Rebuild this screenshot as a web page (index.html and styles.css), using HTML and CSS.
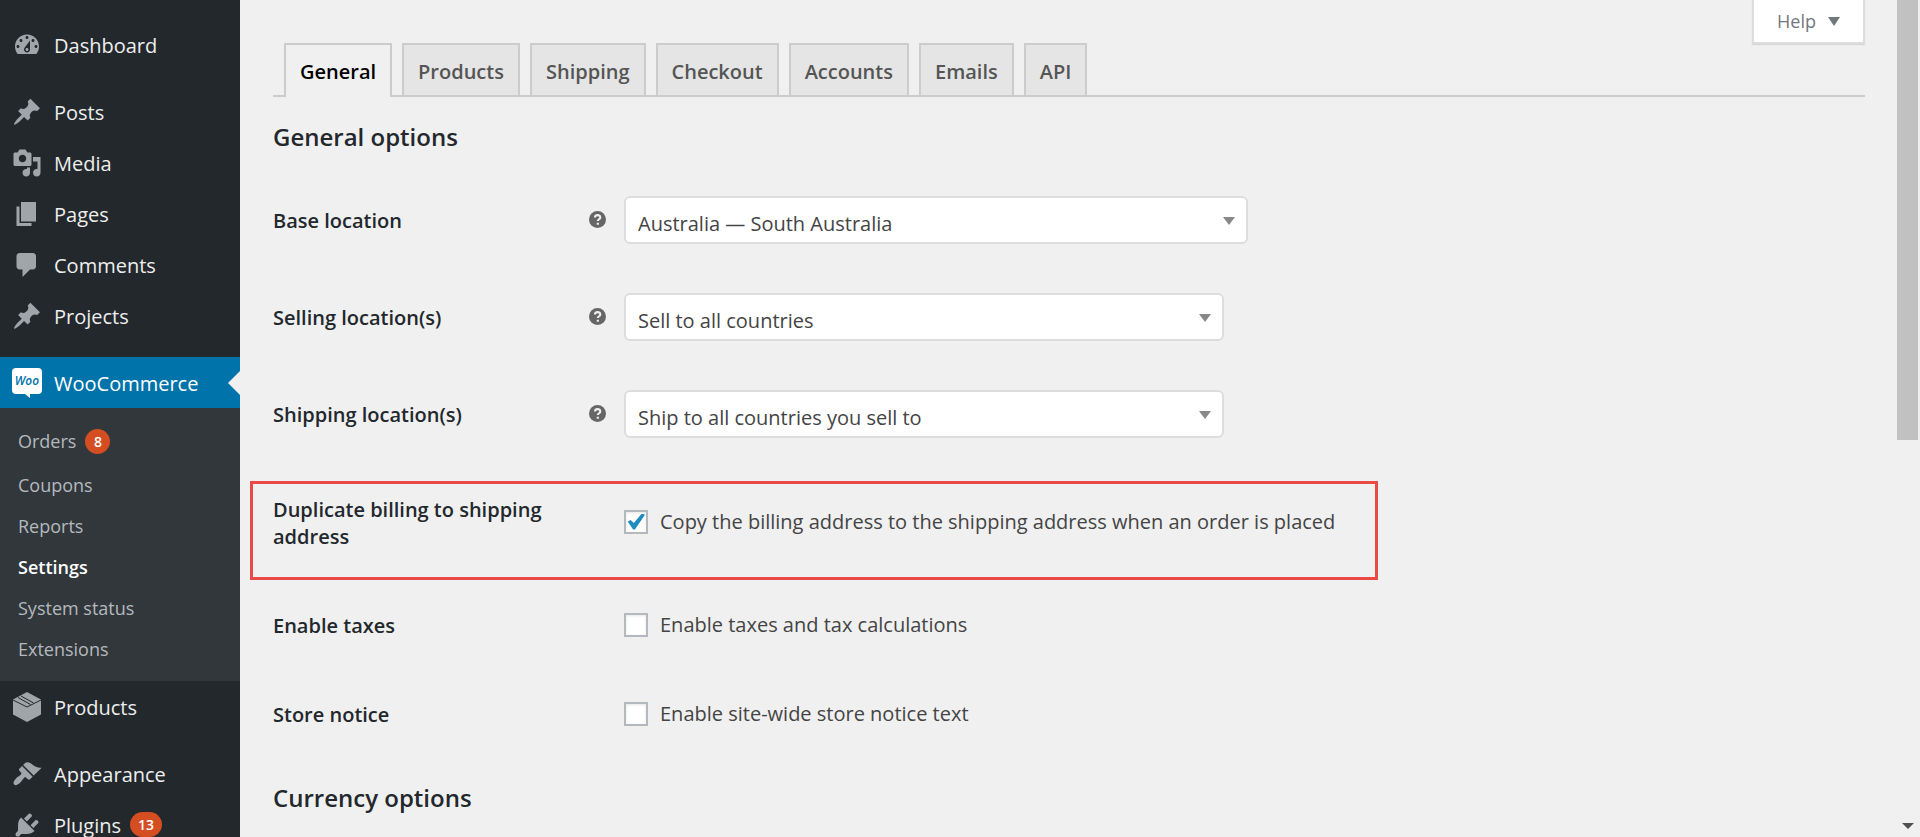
FILE: index.html
```html
<!DOCTYPE html>
<html lang="en">
<head>
<meta charset="utf-8">
<title>WooCommerce settings</title>
<link rel="stylesheet" href="styles.css">
</head>
<body>
<div class="app">
  <nav class="sidebar" aria-label="Main menu">
    <ul class="menu">
      <li><a class="menu-link" href="#"><svg class="icon" viewBox="0 0 20 20"><path d="M3.76 16h12.48c1.1-1.37 1.76-3.11 1.76-5 0-4.42-3.58-8-8-8s-8 3.58-8 8c0 1.89.66 3.63 1.76 5zM10 4c.55 0 1 .45 1 1s-.45 1-1 1-1-.45-1-1 .45-1 1-1zM6 6c.55 0 1 .45 1 1s-.45 1-1 1-1-.45-1-1 .45-1 1-1zm8 0c.55 0 1 .45 1 1s-.45 1-1 1-1-.45-1-1 .45-1 1-1zm-5.37 5.55L12 7v6c0 1.1-.9 2-2 2s-2-.9-2-2c0-.57.24-1.08.63-1.45zM4 10c.55 0 1 .45 1 1s-.45 1-1 1-1-.45-1-1 .45-1 1-1zm12 0c.55 0 1 .45 1 1s-.45 1-1 1-1-.45-1-1 .45-1 1-1zm-5 3c0-.55-.45-1-1-1s-1 .45-1 1 .45 1 1 1 1-.45 1-1z"/></svg><span class="menu-text">Dashboard</span></a></li>
      <li class="menu-group"><a class="menu-link" href="#"><svg class="icon" viewBox="0 0 20 20"><path d="M10.44 3.02l1.82-1.82 6.36 6.35-1.83 1.82c-1.05-.68-2.48-.57-3.41.36l-.75.75c-.92.93-1.04 2.35-.35 3.41l-1.83 1.82-2.41-2.41-2.8 2.79c-.42.42-3.38 2.71-3.8 2.29s1.86-3.39 2.28-3.81l2.79-2.79L4.1 9.36l1.83-1.82c1.05.69 2.48.57 3.4-.36l.75-.75c.93-.92 1.05-2.35.36-3.41z"/></svg><span class="menu-text">Posts</span></a></li>
      <li><a class="menu-link" href="#"><svg class="icon" viewBox="0 0 20 20"><path d="M13 11V4c0-.55-.45-1-1-1h-1.67L9 1H5L3.67 3H2c-.55 0-1 .45-1 1v7c0 .55.45 1 1 1h10c.55 0 1-.45 1-1zM7 4.5c1.38 0 2.5 1.12 2.5 2.5S8.38 9.5 7 9.5 4.5 8.38 4.5 7 5.62 4.5 7 4.5zM14 6h5v10.5c0 1.38-1.12 2.5-2.5 2.5S14 17.88 14 16.5s1.12-2.5 2.5-2.5c.17 0 .34.02.5.05V9h-3V6zm-4 8.05V13h2v3.5c0 1.38-1.12 2.5-2.5 2.5S7 17.88 7 16.5 8.12 14 9.5 14c.17 0 .34.02.5.05z"/></svg><span class="menu-text">Media</span></a></li>
      <li><a class="menu-link" href="#"><svg class="icon" viewBox="0 0 20 20"><path d="M6 15V2h10v13H6zm-1 1h8v2H3V5h2v11z"/></svg><span class="menu-text">Pages</span></a></li>
      <li><a class="menu-link" href="#"><svg class="icon" viewBox="0 0 20 20"><path d="M5 2h9c1.1 0 2 .9 2 2v7c0 1.1-.9 2-2 2h-2l-5 5v-5H5c-1.1 0-2-.9-2-2V4c0-1.1.9-2 2-2z"/></svg><span class="menu-text">Comments</span></a></li>
      <li><a class="menu-link" href="#"><svg class="icon" viewBox="0 0 20 20"><path d="M10.44 3.02l1.82-1.82 6.36 6.35-1.83 1.82c-1.05-.68-2.48-.57-3.41.36l-.75.75c-.92.93-1.04 2.35-.35 3.41l-1.83 1.82-2.41-2.41-2.8 2.79c-.42.42-3.38 2.71-3.8 2.29s1.86-3.39 2.28-3.81l2.79-2.79L4.1 9.36l1.83-1.82c1.05.69 2.48.57 3.4-.36l.75-.75c.93-.92 1.05-2.35.36-3.41z"/></svg><span class="menu-text">Projects</span></a></li>
      <li class="menu-group">
        <a class="menu-link menu-link--current" href="#"><svg class="icon" viewBox="0 0 30 30"><path d="M4 0h22a4 4 0 0 1 4 4v18a4 4 0 0 1-4 4h-8v4l-5-4H4a4 4 0 0 1-4-4V4a4 4 0 0 1 4-4z"/><text class="woo-mark" x="15" y="17" text-anchor="middle">Woo</text></svg><span class="menu-text">WooCommerce</span></a>
        <ul class="submenu">
          <li><a class="submenu-link" href="#">Orders <span class="count">8</span></a></li>
          <li><a class="submenu-link" href="#">Coupons</a></li>
          <li><a class="submenu-link" href="#">Reports</a></li>
          <li><a class="submenu-link submenu-link--current" href="#">Settings</a></li>
          <li><a class="submenu-link" href="#">System status</a></li>
          <li><a class="submenu-link" href="#">Extensions</a></li>
        </ul>
      </li>
      <li><a class="menu-link" href="#"><svg class="icon" viewBox="0 0 30 30"><path d="M15 0l14 7.500v15L15 30 1 22.500v-15z"/><path class="box-seam" d="M1 8l14 7 14-7M9 4l12.500 7M6 5.500l12.500 7"/></svg><span class="menu-text">Products</span></a></li>
      <li class="menu-group"><a class="menu-link" href="#"><svg class="icon" viewBox="0 0 20 20"><path d="M14.48 11.06L7.41 3.99l1.5-1.5c.5-.56 2.3-.47 3.51.32 1.21.8 1.43 1.28 2.91 2.1 1.18.64 2.45 1.26 4.45.85zm-.71.71L6.7 4.7 4.93 6.47c-.39.39-.39 1.02 0 1.41l1.06 1.06c.39.39.39 1.03 0 1.42-.6.6-1.43 1.11-2.21 1.69-.35.26-.7.53-1.01.84C1.43 14.23.4 16.08 1.4 17.07c.99 1 2.84-.03 4.18-1.36.31-.31.58-.66.85-1.02.57-.78 1.08-1.61 1.69-2.21.39-.39 1.02-.39 1.41 0l1.06 1.06c.39.39 1.02.39 1.41 0z"/></svg><span class="menu-text">Appearance</span></a></li>
      <li><a class="menu-link" href="#"><svg class="icon" viewBox="0 0 20 20"><path d="M13.11 4.36L9.87 7.6 8 5.73l3.24-3.24c.35-.34 1.05-.2 1.56.32.52.51.66 1.21.31 1.55zm-8 1.77l.91-1.12 9.01 9.01-1.19.84c-.71.71-2.63 1.16-3.82 1.16H6.14L4.9 17.26c-.59.59-1.54.59-2.12 0-.59-.58-.59-1.53 0-2.12l1.24-1.24v-3.88c0-1.13.4-3.19 1.09-3.89zm7.26 3.97l3.24-3.24c.34-.35 1.04-.21 1.55.31.52.51.66 1.21.31 1.55l-3.24 3.25z"/></svg><span class="menu-text">Plugins</span> <span class="count">13</span></a></li>
    </ul>
  </nav>

  <main class="content">
    <button class="help" type="button">Help<span class="caret"></span></button>

    <nav class="tabs" aria-label="Settings sections">
      <a class="tab tab--active" href="#">General</a>
      <a class="tab" href="#">Products</a>
      <a class="tab" href="#">Shipping</a>
      <a class="tab" href="#">Checkout</a>
      <a class="tab" href="#">Accounts</a>
      <a class="tab" href="#">Emails</a>
      <a class="tab" href="#">API</a>
    </nav>

    <form class="settings">
      <h2 class="section-title">General options</h2>

      <div class="row">
        <label class="row-label" for="base">Base location</label>
        <svg class="tip" viewBox="0 0 16 16" role="img" aria-label="Help tip"><circle cx="8" cy="8" r="8"/><path class="tip-mark" d="M5.600 6.200C5.600 3.200 10.600 3.200 10.600 6c0 1.800-2.300 1.700-2.300 3.500M8.300 11v2"/></svg>
        <div class="select select--wide"><select id="base"><option>Australia — South Australia</option></select></div>
      </div>
      <div class="row">
        <label class="row-label" for="selling">Selling location(s)</label>
        <svg class="tip" viewBox="0 0 16 16" role="img" aria-label="Help tip"><circle cx="8" cy="8" r="8"/><path class="tip-mark" d="M5.600 6.200C5.600 3.200 10.600 3.200 10.600 6c0 1.800-2.300 1.700-2.300 3.500M8.300 11v2"/></svg>
        <div class="select"><select id="selling"><option>Sell to all countries</option></select></div>
      </div>
      <div class="row">
        <label class="row-label" for="shipping">Shipping location(s)</label>
        <svg class="tip" viewBox="0 0 16 16" role="img" aria-label="Help tip"><circle cx="8" cy="8" r="8"/><path class="tip-mark" d="M5.600 6.200C5.600 3.200 10.600 3.200 10.600 6c0 1.800-2.300 1.700-2.300 3.500M8.300 11v2"/></svg>
        <div class="select"><select id="shipping"><option>Ship to all countries you sell to</option></select></div>
      </div>
      <div class="row row--check row--highlight">
        <span class="row-label">Duplicate billing to shipping address</span>
        <label class="check"><input type="checkbox" checked><span>Copy the billing address to the shipping address when an order is placed</span></label>
      </div>
      <div class="row row--check">
        <span class="row-label">Enable taxes</span>
        <label class="check"><input type="checkbox"><span>Enable taxes and tax calculations</span></label>
      </div>
      <div class="row row--check">
        <span class="row-label">Store notice</span>
        <label class="check"><input type="checkbox"><span>Enable site-wide store notice text</span></label>
      </div>

      <h2 class="section-title">Currency options</h2>
    </form>
  </main>

  <div class="scrollbar" aria-hidden="true"><div class="scrollbar-thumb"></div><div class="scrollbar-arrow"></div></div>
</div>
</body>
</html>
```
FILE: styles.css
```css
* {
  box-sizing: border-box;
}

body {
  margin: 0;
  background: #f0f0f0;
  color: #444;
  font: 20px/27px "Open Sans", "Noto Sans", sans-serif;
}

ul {
  margin: 0;
  padding: 0;
  list-style: none;
}

a {
  color: inherit;
  text-decoration: none;
}

.app {
  display: flex;
  height: 100vh;
  overflow: hidden;
}

/* Sidebar */

.sidebar {
  flex: none;
  width: 240px;
  padding-top: 19px;
  background: #23282d;
}

.menu-group {
  margin-top: 16px;
}

.menu-link {
  position: relative;
  display: flex;
  align-items: center;
  height: 51px;
  padding-left: 12px;
  color: #eee;
}

.menu-text {
  padding-top: 2px;
}

.icon {
  flex: none;
  width: 30px;
  height: 30px;
  margin-right: 12px;
  fill: #a0a5aa;
}

.menu-link--current {
  background: #0073aa;
  color: #fff;
}

.menu-link--current .icon {
  fill: #fff;
}

.menu-link--current::after {
  content: "";
  position: absolute;
  top: 14px;
  right: 0;
  border: 12px solid transparent;
  border-left-width: 0;
  border-right-color: #f0f0f0;
}

.icon .woo-mark {
  fill: #0073aa;
  font: italic 600 12px "Open Sans", sans-serif;
}

.box-seam {
  fill: none;
  stroke: #23282d;
  stroke-width: 1;
}

.submenu {
  padding: 10px 0 11px;
  background: #32373c;
}

.submenu-link {
  display: flex;
  align-items: center;
  height: 41px;
  padding-left: 18px;
  color: #b4b9be;
  font-size: 18px;
}

.submenu li:first-child .submenu-link {
  height: 47px;
}

.submenu-link--current {
  color: #fff;
  font-weight: 600;
}

.count {
  min-width: 25px;
  margin-left: 9px;
  padding: 0 8px;
  border-radius: 13px;
  background: #d54e21;
  color: #fff;
  font-size: 14px;
  font-weight: 600;
  line-height: 25px;
  text-align: center;
}

/* Content */

.content {
  position: relative;
  flex: 1;
  min-width: 0;
  padding: 43px 32px 0 33px;
}

.help {
  position: absolute;
  top: 0;
  right: 32px;
  display: flex;
  align-items: center;
  gap: 12px;
  height: 44px;
  padding: 0 23px;
  border: 2px solid #ddd;
  border-top: 0;
  background: #fff;
  box-shadow: 0 1px 1px rgba(0, 0, 0, 0.1);
  color: #72777c;
  font: inherit;
  font-size: 18px;
}

.caret {
  border: 6px solid transparent;
  border-top: 9px solid #72777c;
  border-bottom: 0;
}

.tabs {
  display: flex;
  gap: 10px;
  padding-left: 11px;
  border-bottom: 2px solid #ccc;
}

.tab {
  height: 52px;
  padding: 0 14px;
  border: 2px solid #ccc;
  border-bottom: 0;
  background: #e5e5e5;
  color: #555;
  font-weight: 600;
  line-height: 54px;
}

.tab--active {
  height: 54px;
  margin-bottom: -2px;
  background: #f0f0f0;
  color: #000;
}

.section-title {
  margin: 24px 0 18px;
  color: #23282d;
  font-size: 24px;
  font-weight: 600;
  line-height: 32px;
}

.row {
  display: grid;
  grid-template-columns: 300px 51px 1fr;
  align-items: center;
  min-height: 97px;
}

.row--check {
  grid-template-columns: 351px 1fr;
  min-height: 89px;
}

.row--highlight {
  max-width: 1128px;
  min-height: 99px;
  margin: 19px 0 0 -23px;
  padding: 0 20px 18px;
  border: 3px solid #ea4a45;
}

.row-label {
  max-width: 300px;
  padding-top: 2px;
  color: #23282d;
  font-weight: 600;
}

.tip {
  width: 17px;
  height: 17px;
  margin-left: 16px;
  fill: #666;
}

.tip-mark {
  fill: none;
  stroke: #f0f0f0;
  stroke-width: 2;
}

.select {
  position: relative;
  width: 100%;
  max-width: 600px;
}

.select--wide {
  max-width: 624px;
}

.select select {
  display: block;
  width: 100%;
  height: 48px;
  padding: 7px 40px 0 12px;
  border: 2px solid #ddd;
  border-radius: 6px;
  appearance: none;
  background: #fff;
  color: #444;
  font: inherit;
}

.select::after {
  content: "";
  position: absolute;
  top: 21px;
  right: 13px;
  border: 6px solid transparent;
  border-top: 8px solid #888;
  border-bottom: 0;
  pointer-events: none;
}

.check {
  display: flex;
  align-items: center;
  gap: 12px;
}

.check input {
  flex: none;
  display: grid;
  place-items: center;
  width: 24px;
  height: 24px;
  margin: 0;
  border: 2px solid #b4b9be;
  appearance: none;
  background: #fff;
  box-shadow: inset 0 1px 3px rgba(0, 0, 0, 0.1);
}

.check input:checked::before {
  content: "";
  width: 18px;
  height: 16px;
  background: #1e8cbe;
  clip-path: polygon(4% 50%, 20% 40%, 38% 60%, 82% 0, 100% 8%, 44% 100%, 34% 100%);
}

/* Page scrollbar */

.scrollbar {
  display: flex;
  flex: none;
  flex-direction: column;
  align-items: center;
  justify-content: space-between;
  width: 23px;
  padding: 0 2px 8px 0;
}

.scrollbar-thumb {
  width: 21px;
  height: 440px;
  background: #c1c1c1;
}

.scrollbar-arrow {
  border: 6px solid transparent;
  border-top-color: #505050;
  border-bottom: 0;
}
```
